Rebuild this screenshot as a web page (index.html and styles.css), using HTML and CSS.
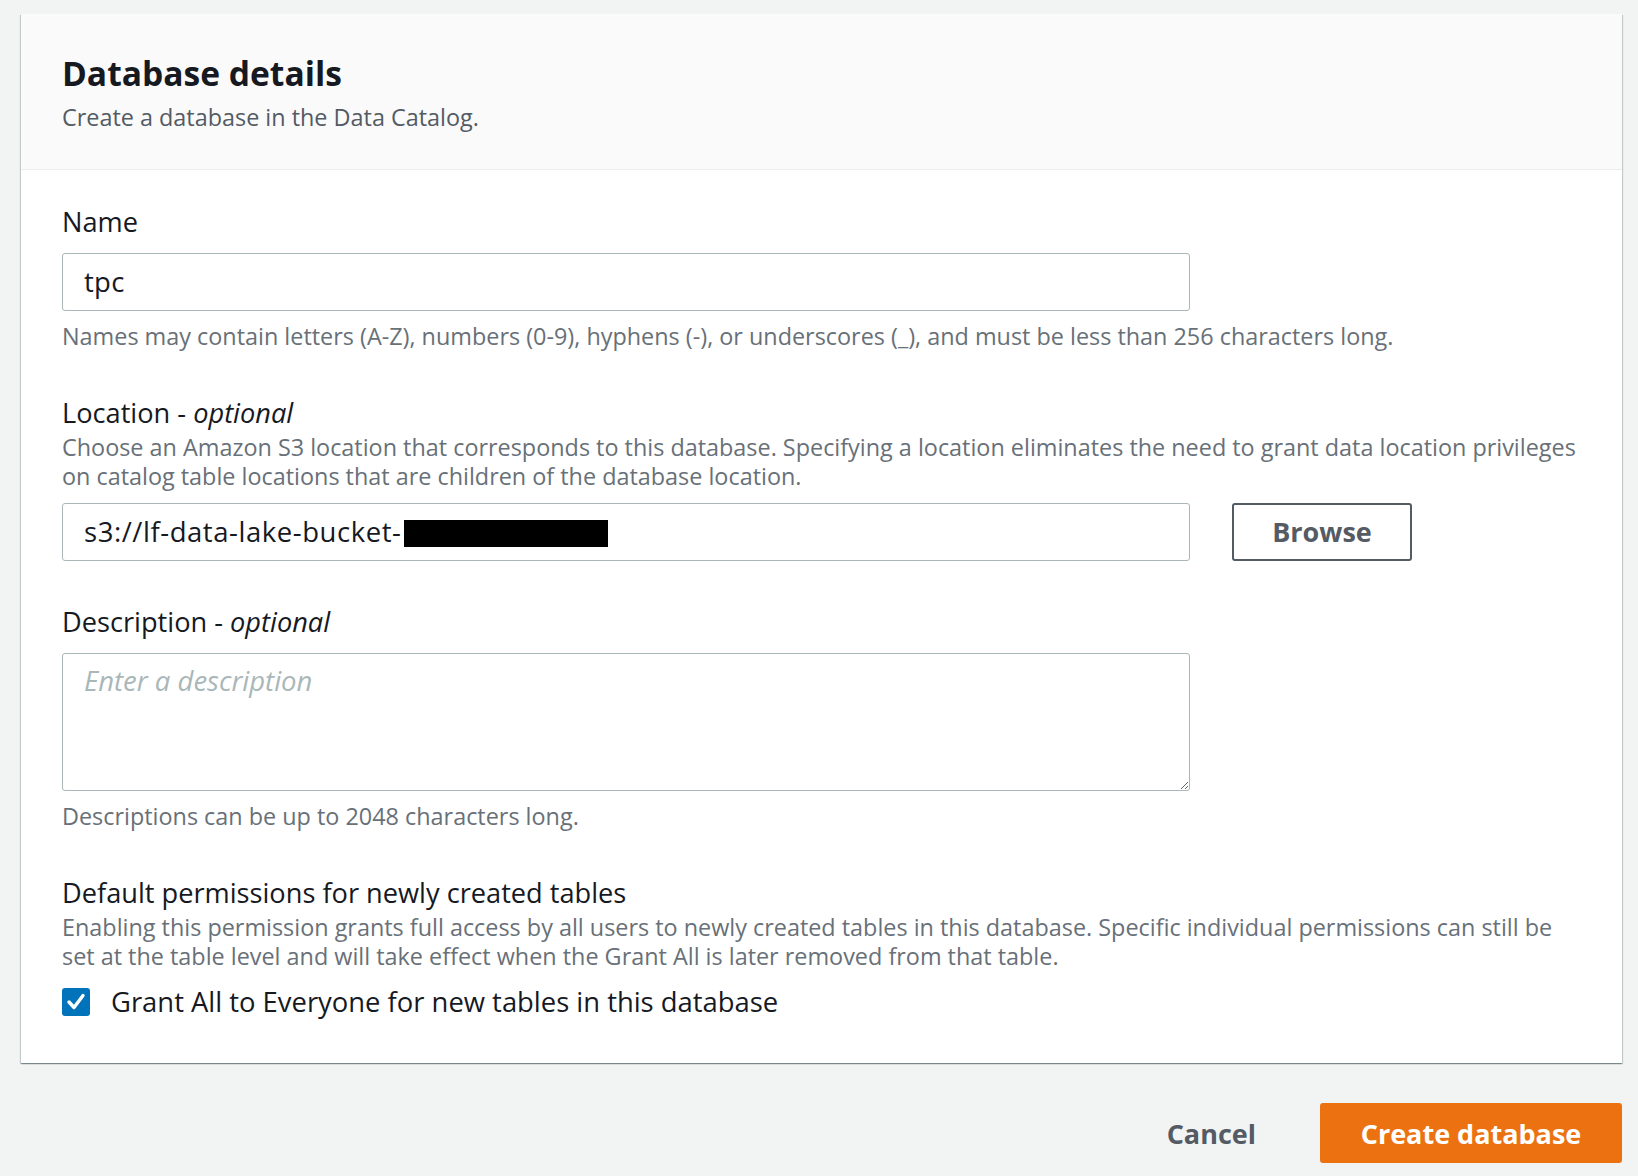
FILE: index.html
```html
<!DOCTYPE html>
<html lang="en">
<head>
<meta charset="utf-8">
<title>Database details</title>
<link rel="stylesheet" href="styles.css">
</head>
<body>
<div class="card">
  <div class="card-header">
    <h2 class="title">Database details</h2>
    <p class="subtitle">Create a database in the Data Catalog.</p>
  </div>
  <div class="card-body">
    <div class="field">
      <label class="label" for="name">Name</label>
      <div class="control">
        <input id="name" class="input" type="text" value="tpc">
      </div>
      <div class="desc hint">Names may contain letters (A-Z), numbers (0-9), hyphens (-), or underscores (_), and must be less than 256 characters long.</div>
    </div>

    <div class="field">
      <div class="label">Location - <em>optional</em></div>
      <div class="desc">Choose an Amazon S3 location that corresponds to this database. Specifying a location eliminates the need to grant data location privileges on catalog table locations that are children of the database location.</div>
      <div class="control row">
        <div class="input input-text">s3://lf-data-lake-bucket-<span class="redact"></span></div>
        <button class="btn-normal" type="button">Browse</button>
      </div>
    </div>

    <div class="field">
      <label class="label" for="desc">Description - <em>optional</em></label>
      <div class="control">
        <textarea id="desc" class="textarea" placeholder="Enter a description"></textarea>
      </div>
      <div class="desc hint">Descriptions can be up to 2048 characters long.</div>
    </div>

    <div class="field">
      <div class="label">Default permissions for newly created tables</div>
      <div class="desc">Enabling this permission grants full access by all users to newly created tables in this database. Specific individual permissions can still be set at the table level and will take effect when the Grant All is later removed from that table.</div>
      <div class="check-row">
        <span class="checkbox">
          <svg viewBox="0 0 28 28" width="28" height="28"><path d="M7 14 L12 19.5 L21 7.5" fill="none" stroke="#fff" stroke-width="3.4" stroke-linecap="round" stroke-linejoin="round"/></svg>
        </span>
        <span class="check-label">Grant All to Everyone for new tables in this database</span>
      </div>
    </div>
  </div>
</div>
<div class="footer">
  <button class="btn-link" type="button">Cancel</button>
  <button class="btn-primary" type="button">Create database</button>
</div>
</body>
</html>
```

FILE: styles.css
```css
* { box-sizing: border-box; }
html, body { margin: 0; }
body {
  background: #f2f3f3;
  font-family: "Open Sans", "Noto Sans", sans-serif;
  color: #16191f;
  padding: 14px 16px 0 21px;
}
.card {
  background: #fff;
  box-shadow: 0 1px 1px 0 rgba(0,28,36,.3), 1px 1px 1px 0 rgba(0,28,36,.15), -1px 1px 1px 0 rgba(0,28,36,.15);
}
.card-header {
  background: #fafafa;
  border-bottom: 1px solid #eaeded;
  padding: 39px 41px 37px;
}
.title {
  margin: 0;
  font-size: 33.6px;
  line-height: 40px;
  font-weight: 700;
  color: #16191f;
}
.subtitle {
  margin: 10px 0 0;
  font-size: 23.4px;
  line-height: 29px;
  color: #545b64;
}
.card-body { padding: 36px 41px 47px; }
.field + .field { margin-top: 45.5px; }
.label {
  display: block;
  font-size: 27.2px;
  line-height: 32px;
  color: #16191f;
}
.label em { font-style: italic; }
.desc {
  font-size: 23.4px;
  line-height: 29px;
  color: #687078;
}
.label + .desc { margin-top: 4.5px; }
.control { margin-top: 14.5px; }
.desc + .control { margin-top: 11.5px; }
.hint { margin-top: 11.5px; }
.row { display: flex; align-items: center; }
.input {
  display: block;
  width: 1128px;
  height: 58px;
  border: 1px solid #aab7b8;
  border-radius: 3px;
  padding: 0 21px;
  font-family: inherit;
  font-size: 27.5px;
  letter-spacing: 0.25px;
  color: #16191f;
  background: #fff;
  outline: none;
}
.input-text {
  display: flex;
  align-items: center;
  white-space: nowrap;
  letter-spacing: 0.55px;
}
.redact {
  display: inline-block;
  width: 204px;
  height: 27px;
  background: #000;
  margin: 4px 0 0 3px;
}
.btn-normal {
  margin-left: 42px;
  width: 180px;
  height: 58px;
  border: 2px solid #545b64;
  border-radius: 3px;
  background: #fff;
  color: #545b64;
  font-family: inherit;
  font-size: 27px;
  font-weight: 700;
}
.textarea {
  display: block;
  width: 1128px;
  height: 138px;
  border: 1px solid #aab7b8;
  border-radius: 3px;
  padding: 8px 21px;
  font-family: inherit;
  font-size: 27.5px;
  color: #16191f;
  outline: none;
  resize: vertical;
}
.textarea::placeholder { color: #aab7b8; font-style: italic; }
.check-row {
  display: flex;
  align-items: flex-start;
  margin-top: 17px;
}
.checkbox {
  flex: none;
  width: 28px;
  height: 28px;
  border-radius: 3px;
  background: #0073bb;
  display: flex;
}
.check-label {
  margin-left: 21px;
  font-size: 27.4px;
  line-height: 28px;
  color: #16191f;
}
.footer {
  display: flex;
  justify-content: flex-end;
  align-items: center;
  margin-top: 40px;
}
.btn-link {
  background: none;
  border: none;
  color: #545b64;
  font-family: inherit;
  font-size: 27px;
  font-weight: 700;
  padding: 0;
  margin-right: 64px;
}
.btn-primary {
  height: 60px;
  padding: 0;
  width: 302px;
  border: none;
  border-radius: 3px;
  background: #ec7211;
  color: #fff;
  font-family: inherit;
  font-size: 27px;
  font-weight: 700;
}
```
